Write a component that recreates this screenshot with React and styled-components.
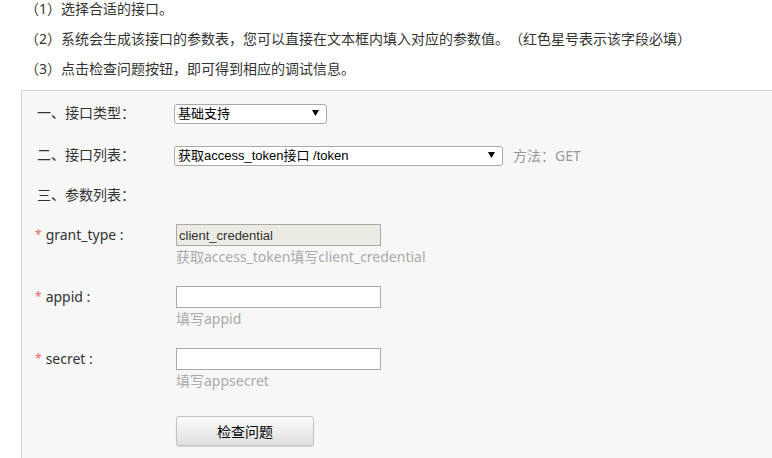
import styled, { createGlobalStyle } from "styled-components";

const GlobalStyle = createGlobalStyle`
  html, body {
    margin: 0;
    padding: 0;
    background: #fff;
    overflow: hidden;
  }
  body {
    font-family: "Noto Sans", "Noto Sans CJK SC", sans-serif;
    font-size: 14px;
    color: #333;
    text-spacing-trim: space-all;
  }
  * {
    text-spacing-trim: space-all;
  }
`;

const Page = styled.div`
  width: 772px;
  height: 458px;
  overflow: hidden;
`;

const Intro = styled.div`
  margin-top: -6px;
  padding-left: 25px;
`;

const IntroLine = styled.p`
  margin: 0;
  line-height: 30px;
  white-space: nowrap;
`;

const Panel = styled.div`
  margin: 6px 0 0 21px;
  width: 900px;
  height: 500px;
  padding-top: 12px;
  background: #f7f7f7;
  border-top: 1px solid #d4d4d4;
  border-left: 1px solid #d4d4d4;
`;

const Row = styled.div`
  display: flex;
  align-items: ${(p) => (p.$top ? "flex-start" : "center")};
  margin-top: ${(p) => p.$gap || 0}px;
`;

const Label = styled.div`
  width: ${(p) => (p.$required ? 139 : 137)}px;
  margin-left: ${(p) => (p.$required ? 13 : 15)}px;
  line-height: ${(p) => (p.$tall ? 22 : 20)}px;
  white-space: nowrap;
  flex-shrink: 0;
`;

const Star = styled.span`
  display: inline-block;
  color: #e66;
  font-size: 12px;
  margin-right: 4px;
  vertical-align: 1px;
`;

const SelectWrap = styled.div`
  position: relative;
  width: ${(p) => p.$width}px;
  height: 20px;
`;

const Select = styled.select`
  appearance: none;
  width: 100%;
  height: 20px;
  margin: 0;
  padding: 0 0 0 3px;
  border: 1px solid #a9a9a9;
  border-radius: 3px;
  background: #fff;
  color: #000;
  font-family: "Liberation Sans", "Noto Sans CJK SC", sans-serif;
  font-size: 13px;
  line-height: 18px;
  outline: none;
`;

const Arrow = styled.svg`
  position: absolute;
  right: 8px;
  top: 7px;
  pointer-events: none;
`;

const Method = styled.span`
  margin-left: 10px;
  color: #999;
  white-space: nowrap;
`;

const Field = styled.div`
  display: flex;
  flex-direction: column;
  margin-left: 2px;
`;

const Input = styled.input`
  box-sizing: border-box;
  width: 205px;
  height: 22px;
  margin: 0;
  padding: 0 2px;
  border: 1px solid #a9a9a9;
  background: ${(p) => (p.disabled ? "#ebebe4" : "#fff")};
  color: #333;
  font-family: "Liberation Sans", "Noto Sans CJK SC", sans-serif;
  font-size: 13px;
  outline: none;
`;

const Hint = styled.div`
  color: #aaa;
  line-height: 22px;
  white-space: nowrap;
`;

const Button = styled.button`
  width: 138px;
  height: 30px;
  margin: 24px 0 0 154px;
  border: 1px solid #c2c2c2;
  border-radius: 3px;
  background: linear-gradient(#fbfbfb, #e0e0e0);
  box-shadow: 0 1px 1px rgba(0, 0, 0, 0.12);
  color: #000;
  font-family: "Noto Sans CJK SC", sans-serif;
  font-size: 14px;
  padding: 0;
`;

function DropDown({ width, value }) {
  return (
    <SelectWrap $width={width}>
      <Select defaultValue={value}>
        <option>{value}</option>
      </Select>
      <Arrow width="7" height="6" viewBox="0 0 7 6">
        <path d="M0 0 H7 L3.5 6 Z" fill="#000" />
      </Arrow>
    </SelectWrap>
  );
}

const params = [
  { name: "grant_type", value: "client_credential", hint: "获取access_token填写client_credential", disabled: true },
  { name: "appid", value: "", hint: "填写appid" },
  { name: "secret", value: "", hint: "填写appsecret" },
];

export default function App() {
  return (
    <Page>
      <GlobalStyle />
      <Intro>
        <IntroLine>（1）选择合适的接口。</IntroLine>
        <IntroLine>（2）系统会生成该接口的参数表，您可以直接在文本框内填入对应的参数值。（红色星号表示该字段必填）</IntroLine>
        <IntroLine>（3）点击检查问题按钮，即可得到相应的调试信息。</IntroLine>
      </Intro>
      <Panel>
        <Row>
          <Label>一、接口类型：</Label>
          <DropDown width={153} value="基础支持" />
        </Row>
        <Row $gap={22}>
          <Label>二、接口列表：</Label>
          <DropDown width={329} value="获取access_token接口 /token" />
          <Method>方法：GET</Method>
        </Row>
        <Row $gap={20}>
          <Label>三、参数列表：</Label>
        </Row>
        {params.map((p, i) => (
          <Row key={p.name} $top $gap={i === 0 ? 19 : 18}>
            <Label $required $tall>
              <Star>*</Star>
              {p.name} :
            </Label>
            <Field>
              <Input defaultValue={p.value} disabled={p.disabled} />
              <Hint>{p.hint}</Hint>
            </Field>
          </Row>
        ))}
        <Button>检查问题</Button>
      </Panel>
    </Page>
  );
}
